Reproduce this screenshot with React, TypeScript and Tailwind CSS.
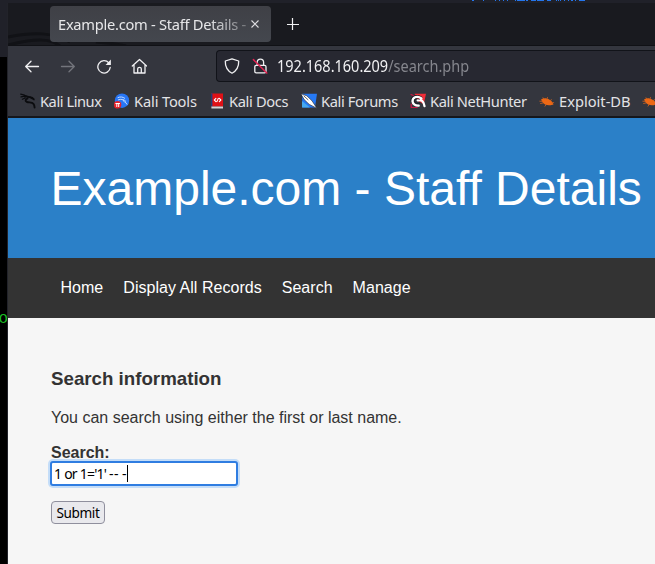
import React from "react";

type IconProps = { children: React.ReactNode; className?: string };

const Glyph = ({ children, className = "" }: IconProps) => (
  <svg
    viewBox="0 0 16 16"
    className={`h-4 w-4 shrink-0 ${className}`}
    fill="none"
    stroke="currentColor"
    strokeWidth="1.3"
    strokeLinecap="round"
    strokeLinejoin="round"
  >
    {children}
  </svg>
);

const DragonIcon = () => (
  <Glyph className="text-[#0b0c0f]">
    <path d="M.7 1.2 4.6 2.2 8.5 4M1 3.8 5 3.2M2.4 6.2 5.2 5" strokeWidth="1.2" />
    <path d="M4.8 3.6c3.4-.6 5.7.4 8.7 2.4M7.5 5.6c-2.2.6-2.5 2.4-.8 3.2 2.2 1 5.2.2 6.8 2 .9 1 1 2.2 1.1 3.7" strokeWidth="1.9" />
    <path d="m10.5 4 2 .6 1.6 2.2" strokeWidth="1.2" />
  </Glyph>
);

const ToolsIcon = () => (
  <Glyph>
    <circle cx="8" cy="7.7" r="7.2" fill="#2776f5" stroke="none" />
    <path d="M4 4.6c2.6-1.2 4.6-.7 6.6.6M4.4 6.8c3-1.2 5.6-.3 7.4 1.5M9 7c-.5 2 2.8 1.2 4 4.2" stroke="#d6e7ff" strokeWidth=".9" />
    <circle cx="3.6" cy="11.8" r="3.7" fill="#e5222b" stroke="none" />
    <path d="M1.8 10.5h3.8M2.8 10.6v3M4.7 10.6v3" stroke="#fff" strokeWidth="1" />
  </Glyph>
);

const DocsIcon = () => (
  <Glyph>
    <path d="M2 .5h12v13H2z" fill="#df1016" stroke="none" />
    <path d="M2 .5h1.4v13H2z" fill="#253a78" stroke="none" />
    <path d="M2.4 13.5H14v2H2.4z" fill="#d5d2d5" stroke="none" />
    <path d="M6.9 5.4 5.3 7l1.6 1.6M10.3 5.4 11.9 7l-1.6 1.6M9.3 5.4 7.9 8.6" stroke="#fff" strokeWidth="1.1" />
  </Glyph>
);

const ForumsIcon = () => (
  <Glyph>
    <path d="M1 .8h15l-2 13.8H1.5z" fill="#2679f5" stroke="none" />
    <path d="M1 8v6.6h8z" fill="#46a9ef" stroke="none" />
    <path d="M0 .8 5.8 2.8l5.2 5 5 7.6-8-4.2-4.6-4.4z" fill="#fff" stroke="#202126" strokeWidth=".6" />
    <path d="m3 3.1 4 3.6" stroke="#202126" strokeWidth=".7" />
  </Glyph>
);

const NetHunterIcon = () => (
  <Glyph>
    <path d="M4.5.8H16l-2.3 10.5L8 8z" fill="#f12d38" stroke="none" />
    <path d="m1 1.5 3 1.3M1.2 11v3.5h6" stroke="#c91644" strokeWidth="1.2" />
    <path d="M1.2 7.5C1.5 3 7.5.8 11.8 4.6" stroke="#171a20" strokeWidth="1.3" />
    <path d="M11.4 5.4C8 2.5 2.4 3.8 2.5 8.2c.2 3 3.2 4.7 6.2 4.4" stroke="#fff" strokeWidth="2.3" />
    <path d="M7.7 7.4c3.4-1.3 6.2.8 6.8 5.8" stroke="#fff" strokeWidth="2.3" />
    <path d="M9.3 6.3C6.2 4.7 4 6.3 4.6 8.4c.6 2 2.8 2.7 5.4 1.6" stroke="#171a20" strokeWidth=".9" />
  </Glyph>
);

const BugIcon = () => (
  <Glyph className="relative top-px">
    <path d="M2 5.5c1.7-1 3.7-1.4 5.4-1 2.6.4 4.9 2 6.1 4l1 2-2.9.7c-3.2.5-6-.4-7.8-2.4z" fill="#ed6815" stroke="none" />
    <path d="M4.8 5 4 3.7M8 5l.5-1.5M11 6.7l1.5-1M3.4 7.4.8 7.2M4 9l-2.4.5M7 10.8l-1 1.4M12.8 9l1.9-.4" stroke="#cf621e" strokeWidth=".8" />
  </Glyph>
);

const bookmarks = [
  { label: "Kali Linux", width: "w-[94px]", tracking: "tracking-[-0.45px]", icon: <DragonIcon /> },
  { label: "Kali Tools", width: "w-[95px]", tracking: "tracking-[-0.15px]", icon: <ToolsIcon /> },
  { label: "Kali Docs", width: "w-[92px]", tracking: "tracking-[-0.35px]", icon: <DocsIcon /> },
  { label: "Kali Forums", width: "w-[109px]", tracking: "tracking-[-0.38px]", icon: <ForumsIcon /> },
  { label: "Kali NetHunter", width: "w-[129px]", tracking: "tracking-[-0.38px]", icon: <NetHunterIcon /> },
  { label: "Exploit-DB", width: "w-[103px]", tracking: "tracking-normal", icon: <BugIcon /> },
  { label: "", width: "w-4", tracking: "", icon: <BugIcon /> },
];

const TabStrip = () => (
  <div className="relative flex h-[43px] shrink-0 items-start border-b border-[#101115] bg-[#191a1f] pt-[3px] pl-[42px]">
    <svg className="absolute top-0 left-0 h-[42px] w-[150px]" fill="none" stroke="#111216" strokeWidth="3">
      <path d="M0 34C25 29 45 29 62 39M0 42C28 35 45 35 54 45M88 39q17 1 30 4" />
    </svg>
    <div className="relative flex h-9 w-[221px] items-center rounded-[4px] bg-gradient-to-b from-[#3f4046] to-[#44474e] pl-2">
      <div className="w-[190px] whitespace-nowrap text-[14.67px] leading-9 tracking-[-0.27px] text-[#e7e7e9] [mask-image:linear-gradient(to_right,black_150px,transparent_205px)]">
        Example.com - Staff Details -
      </div>
      <svg className="ml-[3px] h-2 w-2" viewBox="0 0 8 8" stroke="#dedee1" strokeWidth="1.1">
        <path d="m.5.5 7 7M7.5.5l-7 7" />
      </svg>
    </div>
    <svg className="mt-[12px] ml-4 h-3 w-3" viewBox="0 0 12 12" stroke="#f1f1f3" strokeWidth="1.2">
      <path d="M5.5 0v12M0 6.5h12" />
    </svg>
  </div>
);

const Toolbar = () => (
  <div className="flex h-10 shrink-0 items-center pl-4 text-[#f1f1f3]">
    <Glyph><path d="M14.5 8.5H1.7M7 3.2 1.7 8.5 7 13.8" /></Glyph>
    <Glyph className="ml-5 text-[#73757c]"><path d="M1.5 8.5h12.8M9 3.2l5.3 5.3L9 13.8" /></Glyph>
    <Glyph className="ml-5">
      <path d="M12.8 4.9A6.2 6.2 0 1 0 14.2 9.5" />
      <path d="M14.9 1.6v5.3H9.6z" fill="currentColor" stroke="none" />
    </Glyph>
    <Glyph className="ml-[19px]"><path d="M1.3 8 8.5 1.5 15.7 8M3 7v8h11V7M6.7 14.8v-4q0-1.5 1.8-1.5t1.8 1.5v4" /></Glyph>
    <div className="ml-[69px] flex h-8 grow items-center rounded-l-[4px] border border-r-0 border-[#111319] bg-[#272831] pl-[7px]">
      <Glyph><path d="M8 .8 14.7 3q.3 8.5-6.7 12.2Q1 11.5 1.3 3z" /></Glyph>
      <Glyph className="ml-3">
        <rect x="2.8" y="7.4" width="11.2" height="7.4" rx="1.4" />
        <path d="M5.2 7.2V4.3a3.2 3.2 0 0 1 6.4 0v2.9" />
        <path d="M1.4 1.6 14.8 15" stroke="#e32151" strokeWidth="1.5" />
      </Glyph>
      <span className="ml-[9px] origin-left scale-x-[.906] whitespace-nowrap text-[16px] leading-8">192.168.160.209<span className="text-[#85868d]">/search.php</span></span>
    </div>
  </div>
);

const Bookmarks = () => (
  <div className="flex h-8 shrink-0 items-center border-b-2 border-[#15171c] pl-3">
    {bookmarks.map(({ label, width, tracking, icon }, index) => (
      <div key={index} className={`flex shrink-0 items-center gap-1 ${width}`}>
        {icon}
        <span className={`whitespace-nowrap text-[14.67px] leading-5 text-[#e3e3e6] ${tracking}`}>{label}</span>
      </div>
    ))}
  </div>
);

export default function App() {
  return (
    <div className="flex h-[564px] w-[655px] flex-col overflow-hidden bg-black font-['Noto_Sans',sans-serif]">
      <div className="flex h-[3px] shrink-0 justify-end bg-[#202129]">
        <svg className="mr-[69px] h-px w-[114px]" viewBox="0 0 114 1" stroke="#2476ed" strokeWidth="1">
          <path d="M0 .5h2m9 0h1m11 0h1m3 0h1m3 0h1m3 0h1m7 0h1m1 0h8m1 0h2m3 0h5m1 0h7m3 0h4m5 0h1m1 0h1m1 0h1m3 0h1m3 0h1m2 0h2m2 0h1m3 0h6" />
        </svg>
      </div>
      <div className="flex min-h-0 grow">
        <div className="w-[8px] shrink-0 overflow-hidden border-r border-[#22232a]">
          <div className="h-[54px] bg-[#202129]" />
          <div className="-ml-[1.5px] pt-[251px] font-['Liberation_Mono',monospace] text-[16px] leading-[22px] text-[#19bd23]">o</div>
        </div>
        <div className="flex min-w-0 grow flex-col overflow-hidden">
          <TabStrip />
          <div className="shrink-0 bg-[#34363e]"><Toolbar /><Bookmarks /></div>
          <main className="flex grow flex-col bg-[#f6f6f6] font-['Liberation_Sans',sans-serif] text-[#333]">
            <header className="flex h-[140px] shrink-0 items-center bg-[#2b80c8] pt-[2px] pl-[42.5px]">
              <h1 className="whitespace-nowrap text-[48px] leading-[56px] text-white">Example.com - Staff Details</h1>
            </header>
            <nav className="flex h-[60px] shrink-0 items-center gap-5 bg-[#333] pl-[52.5px] text-[16px] tracking-[0.03px] text-white">
              <span>Home</span><span>Display All Records</span><span>Search</span><span>Manage</span>
            </nav>
            <section className="pt-[50px] pl-[43px]">
              <h2 className="text-[18.72px] leading-[22px] font-bold">Search information</h2>
              <p className="mt-[19px] text-[16px] leading-[18px]">You can search using either the first or last name.</p>
              <label className="mt-[17px] block text-[16px] leading-[18px] font-bold">Search:</label>
              <div className="-mt-px -ml-px flex h-[25px] w-[188px] items-center rounded-[3px] border-2 border-[#2f7de1] bg-white pl-[2px] font-['Noto_Sans',sans-serif] text-[14px] leading-5 text-black shadow-[0_0_0_2px_#c4ddf8]">
                <span className="whitespace-pre [word-spacing:0.1px] tracking-[-0.8px]">1 or 1='1' <span className="[word-spacing:-1px] tracking-[0.45px]">-- -</span></span><span className="h-[17px] w-px bg-black" />
              </div>
              <button className="mt-[15px] flex h-[23px] w-[54px] items-center justify-center rounded-[4px] border border-[#8f8f9d] bg-[#e9e9ed] font-['Noto_Sans',sans-serif] text-[13.6px] leading-5 tracking-[-0.4px] text-black">Submit</button>
            </section>
          </main>
        </div>
      </div>
    </div>
  );
}
